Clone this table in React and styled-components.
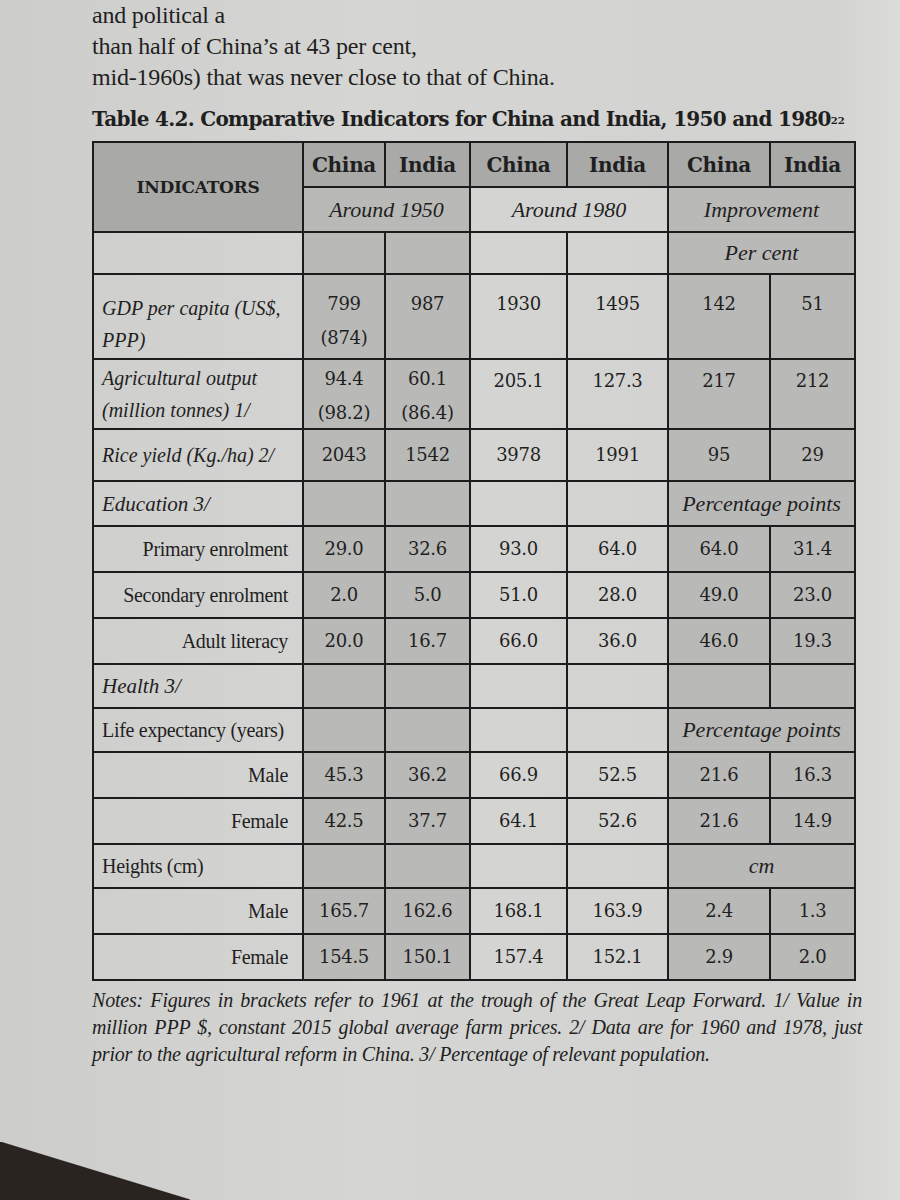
import React from 'react';
import styled, { createGlobalStyle } from 'styled-components';

const GlobalStyle = createGlobalStyle`
  html, body {
    margin: 0;
    padding: 0;
    background: #2b2623;
  }
`;

// Paper page, with the dark desk showing in the bottom-left corner
const Page = styled.div`
  width: 900px;
  height: 1200px;
  overflow: hidden;
  background:
    linear-gradient(to top right, #2a2420 50%, transparent 51%) left bottom / 190px 58px no-repeat,
    linear-gradient(90deg, #cdcdcb 0%, #d5d5d3 40%, #d2d2d0 92%, #dcdcda 100%);
  color: #1f1f1f;
  font-family: "DejaVu Serif", "Liberation Serif", serif;
  padding: 0 44px 0 92px;
  box-sizing: border-box;
`;

const Intro = styled.p`
  margin: 0;
  font-family: "Liberation Serif", serif;
  font-size: 24px;
  line-height: 31px;
  letter-spacing: -0.2px;
`;

const Title = styled.h2`
  margin: 14px 0 10px 0;
  font-size: 20px;
  font-weight: bold;
  letter-spacing: -0.7px;
  font-family: "DejaVu Serif", serif;
  white-space: nowrap;

  sup {
    font-size: 10px;
    letter-spacing: 0;
    vertical-align: 2px;
  }
`;

const Grid = styled.div`
  display: grid;
  grid-template-columns: 210px 82px 85px 97px 101px 102px 85px;
  grid-template-rows: 45px 45px 42px 85px 70px 52px 45px 46px 46px 46px 44px 44px 46px 46px 44px 46px 46px;
  border-top: 2px solid #1c1c1c;
  border-left: 2px solid #1c1c1c;
  width: 764px;
  box-sizing: border-box;
`;

const Cell = styled.div`
  grid-column: ${p => (p.$span ? `span ${p.$span}` : 'auto')};
  grid-row: ${p => (p.$rows ? `span ${p.$rows}` : 'auto')};
  background: ${p => (p.$tone === 'head' ? '#a9a9a7' : p.$tone === 'shade' ? '#b9b9b7' : 'transparent')};
  border-right: 2px solid #1c1c1c;
  border-bottom: 2px solid #1c1c1c;
  display: flex;
  align-items: ${p => p.$align || 'center'};
  justify-content: ${p => p.$justify || 'center'};
  padding: ${p => p.$pad || '0 6px'};
  box-sizing: border-box;
  font-size: 19px;
  line-height: 34px;
  text-align: center;
`;

const HeadText = styled.span`
  font-weight: bold;
  font-size: 20px;
  letter-spacing: -0.3px;
`;

const IndicatorsText = styled.span`
  font-weight: bold;
  font-size: 17px;
  letter-spacing: -0.3px;
`;

const Ital = styled.span`
  font-family: "Liberation Serif", serif;
  font-style: italic;
  font-size: ${p => p.$size || 22}px;
  line-height: ${p => p.$lh || 34}px;
  text-align: left;
  white-space: nowrap;
`;

const Label = styled.span`
  font-family: "Liberation Serif", serif;
  font-size: 20px;
  letter-spacing: -0.3px;
  white-space: nowrap;
  text-align: ${p => (p.$right ? 'right' : 'left')};
  width: 100%;
`;

const Num = styled.span`
  font-size: 18px;
  letter-spacing: -0.3px;
  line-height: 34px;
`;

const Notes = styled.div`
  width: 770px;
  margin-top: 6px;
  font-family: "Liberation Serif", serif;
  font-style: italic;
  font-size: 20px;
  line-height: 27px;
  letter-spacing: -0.2px;
`;

const NoteLine = styled.div`
  text-align: justify;
  text-align-last: ${p => (p.$last ? 'left' : 'justify')};
  white-space: nowrap;
`;

const values = [
  ['Primary enrolment', '29.0', '32.6', '93.0', '64.0', '64.0', '31.4'],
  ['Secondary enrolment', '2.0', '5.0', '51.0', '28.0', '49.0', '23.0'],
  ['Adult literacy', '20.0', '16.7', '66.0', '36.0', '46.0', '19.3'],
];

const lifeRows = [
  ['Male', '45.3', '36.2', '66.9', '52.5', '21.6', '16.3'],
  ['Female', '42.5', '37.7', '64.1', '52.6', '21.6', '14.9'],
];

const heightRows = [
  ['Male', '165.7', '162.6', '168.1', '163.9', '2.4', '1.3'],
  ['Female', '154.5', '150.1', '157.4', '152.1', '2.9', '2.0'],
];

const toneFor = i => (i === 0 || i === 1 || i === 4 || i === 5 ? 'shade' : undefined);

function DataRow({ row }) {
  const [label, ...nums] = row;
  return (
    <>
      <Cell $justify="flex-end" $pad="0 14px 0 10px"><Label $right>{label}</Label></Cell>
      {nums.map((n, i) => (
        <Cell key={i} $tone={toneFor(i)}><Num>{n}</Num></Cell>
      ))}
    </>
  );
}

function EmptyRow({ label, italic, last }) {
  return (
    <>
      <Cell $justify="flex-start" $pad="0 8px">
        {italic ? <Ital $size={21}>{label}</Ital> : <Label>{label}</Label>}
      </Cell>
      <Cell $tone="shade" />
      <Cell $tone="shade" />
      <Cell />
      <Cell />
      {last ? (
        <Cell $span={2} $tone="shade"><Ital>{last}</Ital></Cell>
      ) : (
        <>
          <Cell $tone="shade" />
          <Cell $tone="shade" />
        </>
      )}
    </>
  );
}

export default function App() {
  return (
    <Page>
      <GlobalStyle />
      <Intro>
        and political a<br />
        than half of China’s at 43 per cent,<br />
        mid-1960s) that was never close to that of China.
      </Intro>

      <Title>
        Table 4.2. Comparative Indicators for China and India, 1950 and 1980<sup>22</sup>
      </Title>

      <Grid>
        {/* header */}
        <Cell $tone="head" $rows={2}><IndicatorsText>INDICATORS</IndicatorsText></Cell>
        {['China', 'India', 'China', 'India', 'China', 'India'].map((c, i) => (
          <Cell key={i} $tone="head"><HeadText>{c}</HeadText></Cell>
        ))}

        <Cell $span={2} $tone="shade"><Ital>Around 1950</Ital></Cell>
        <Cell $span={2}><Ital>Around 1980</Ital></Cell>
        <Cell $span={2} $tone="shade"><Ital>Improvement</Ital></Cell>

        <EmptyRow label="" last="Per cent" />

        {/* GDP */}
        <Cell $justify="flex-start" $align="flex-end" $pad="0 8px 2px">
          <Ital $size={20} $lh={32}>GDP per capita (US$,<br />PPP)</Ital>
        </Cell>
        <Cell $tone="shade" $align="flex-start" $pad="12px 6px 0"><Num>799<br />(874)</Num></Cell>
        <Cell $tone="shade" $align="flex-start" $pad="12px 6px 0"><Num>987</Num></Cell>
        <Cell $align="flex-start" $pad="12px 6px 0"><Num>1930</Num></Cell>
        <Cell $align="flex-start" $pad="12px 6px 0"><Num>1495</Num></Cell>
        <Cell $tone="shade" $align="flex-start" $pad="12px 6px 0"><Num>142</Num></Cell>
        <Cell $tone="shade" $align="flex-start" $pad="12px 6px 0"><Num>51</Num></Cell>

        {/* Agricultural */}
        <Cell $justify="flex-start" $align="flex-end" $pad="0 8px 2px">
          <Ital $size={20} $lh={32}>Agricultural output<br />(million tonnes) 1/</Ital>
        </Cell>
        <Cell $tone="shade" $align="flex-start" $pad="2px 4px 0"><Num>94.4<br />(98.2)</Num></Cell>
        <Cell $tone="shade" $align="flex-start" $pad="2px 4px 0"><Num>60.1<br />(86.4)</Num></Cell>
        <Cell $align="flex-start" $pad="4px 6px 0"><Num>205.1</Num></Cell>
        <Cell $align="flex-start" $pad="4px 6px 0"><Num>127.3</Num></Cell>
        <Cell $tone="shade" $align="flex-start" $pad="4px 6px 0"><Num>217</Num></Cell>
        <Cell $tone="shade" $align="flex-start" $pad="4px 6px 0"><Num>212</Num></Cell>

        {/* Rice */}
        <Cell $justify="flex-start" $pad="0 8px"><Ital $size={20}>Rice yield (Kg./ha) 2/</Ital></Cell>
        {['2043', '1542', '3978', '1991', '95', '29'].map((n, i) => (
          <Cell key={i} $tone={toneFor(i)}><Num>{n}</Num></Cell>
        ))}

        <EmptyRow label="Education 3/" italic last="Percentage points" />
        {values.map(r => <DataRow key={r[0]} row={r} />)}

        <EmptyRow label="Health 3/" italic />
        <EmptyRow label="Life expectancy (years)" last="Percentage points" />
        {lifeRows.map(r => <DataRow key={r[0]} row={r} />)}

        <EmptyRow label="Heights (cm)" last="cm" />
        {heightRows.map((r, i) => <DataRow key={i} row={r} />)}
      </Grid>

      <Notes>
        <NoteLine>Notes: Figures in brackets refer to 1961 at the trough of the Great Leap Forward. 1/ Value in</NoteLine>
        <NoteLine>million PPP $, constant 2015 global average farm prices. 2/ Data are for 1960 and 1978, just</NoteLine>
        <NoteLine $last>prior to the agricultural reform in China. 3/ Percentage of relevant population.</NoteLine>
      </Notes>
    </Page>
  );
}
